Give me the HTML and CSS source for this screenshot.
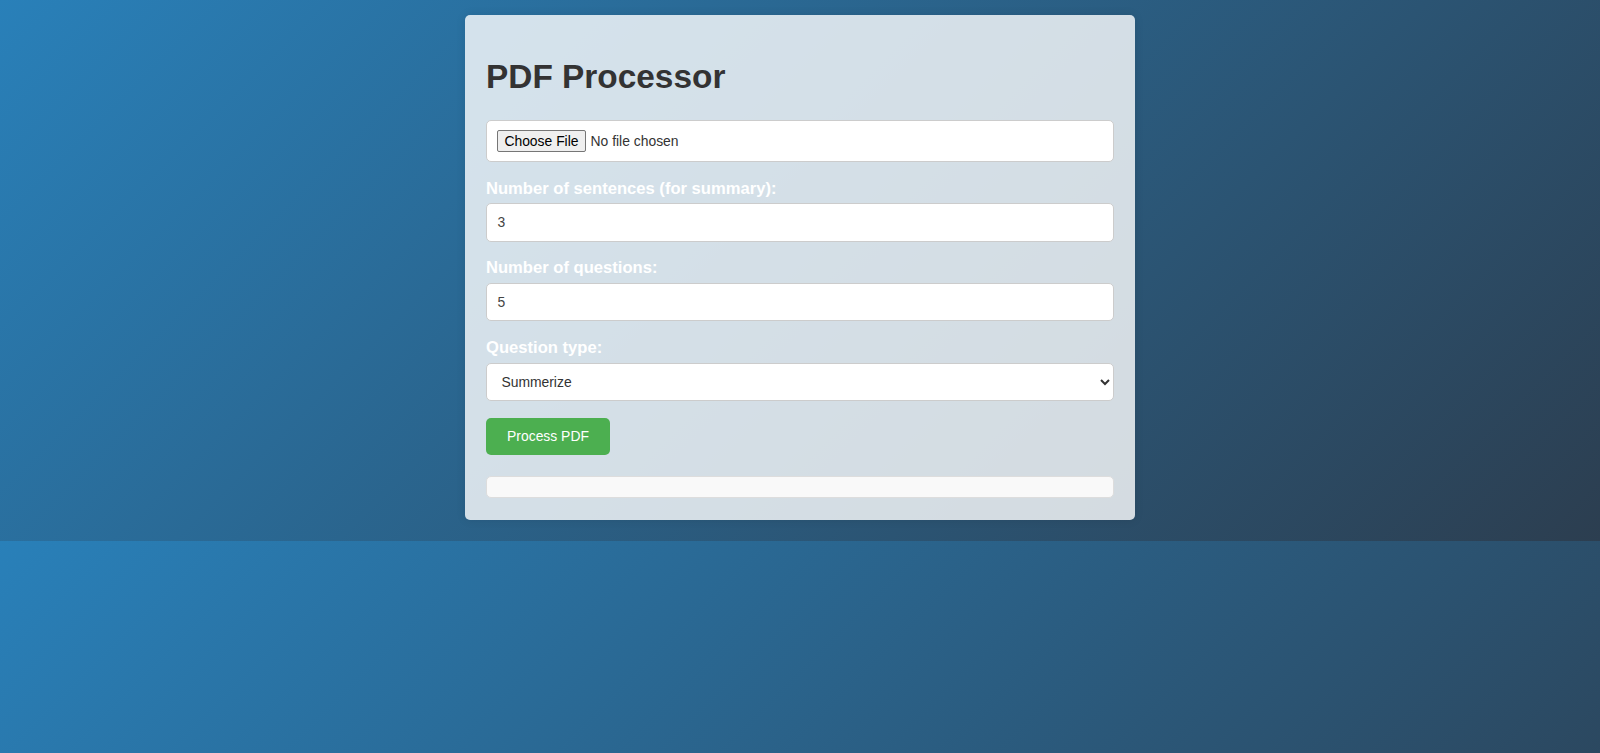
FILE: index.html
```html
<!DOCTYPE html>
<html lang="en">
<head>
<meta charset="utf-8">
<title>PDF Processor</title>
<link rel="stylesheet" href="styles.css">
</head>
<body>
<div class="container">
  <h1 class="title">PDF Processor</h1>
  <form class="form">
    <input class="file-input" type="file" accept=".pdf">
    <label class="label" for="sentences">Number of sentences (for summary):</label>
    <input class="field" id="sentences" type="number" value="3">
    <label class="label" for="questions">Number of questions:</label>
    <input class="field" id="questions" type="number" value="5">
    <label class="label" for="qtype">Question type:</label>
    <select class="field select" id="qtype">
      <option>Summerize</option>
      <option>Multiple choice</option>
      <option>True / False</option>
    </select>
    <button class="btn" type="button">Process PDF</button>
  </form>
  <div class="result"></div>
</div>
</body>
</html>
```

FILE: styles.css
```css
body {
  margin: 0;
  padding: 15px 0 21px;
  font-family: "Liberation Sans", Arial, sans-serif;
  background: linear-gradient(135deg, #2980b9, #2c3e50);
}

.container {
  box-sizing: border-box;
  width: 670px;
  margin: 0 auto;
  padding: 21px 21px 22px;
  background: rgba(255, 255, 255, 0.8);
  border-radius: 5px;
  box-shadow: 0 0 10px rgba(0, 0, 0, 0.1);
}

.title {
  margin: 21.6px 0 24px;
  font-size: 33.4px;
  line-height: 38px;
  font-weight: bold;
  color: #333;
}

.form {
  display: flex;
  flex-direction: column;
  align-items: flex-start;
}

.file-input,
.field {
  box-sizing: border-box;
  width: 100%;
  margin: 0 0 16.6px;
  border: 1px solid #ccc;
  border-radius: 5px;
  background: #fff;
  font-family: "Liberation Sans", Arial, sans-serif;
  font-size: 13.9px;
  color: #444;
}

.file-input {
  height: 42.4px;
  padding: 9.5px 10.4px;
  color: #333;
}

.file-input::file-selector-button {
  font-family: "Liberation Sans", Arial, sans-serif;
  font-size: 13.9px;
  height: 22.4px;
  padding: 0 6px;
  margin-right: 5px;
  color: #000;
  background: #efefef;
  border: 1px solid #767676;
  border-radius: 2px;
}

.field {
  height: 38.4px;
  padding: 0 10.4px;
}

.select {
  padding: 0 8px 0 10.4px;
  color: #333;
}

.label {
  display: block;
  margin-bottom: 5.7px;
  font-size: 16.6px;
  line-height: 19px;
  font-weight: bold;
  color: #fff;
}

.btn {
  height: 37.7px;
  width: 124px;
  padding: 0;
  border: none;
  border-radius: 5px;
  background: #4caf50;
  color: #fff;
  font-family: "Liberation Sans", Arial, sans-serif;
  font-size: 13.9px;
}

.result {
  box-sizing: border-box;
  height: 21.6px;
  margin-top: 21px;
  border: 1px solid #ddd;
  border-radius: 5px;
  background: #f9f9f9;
}
```
